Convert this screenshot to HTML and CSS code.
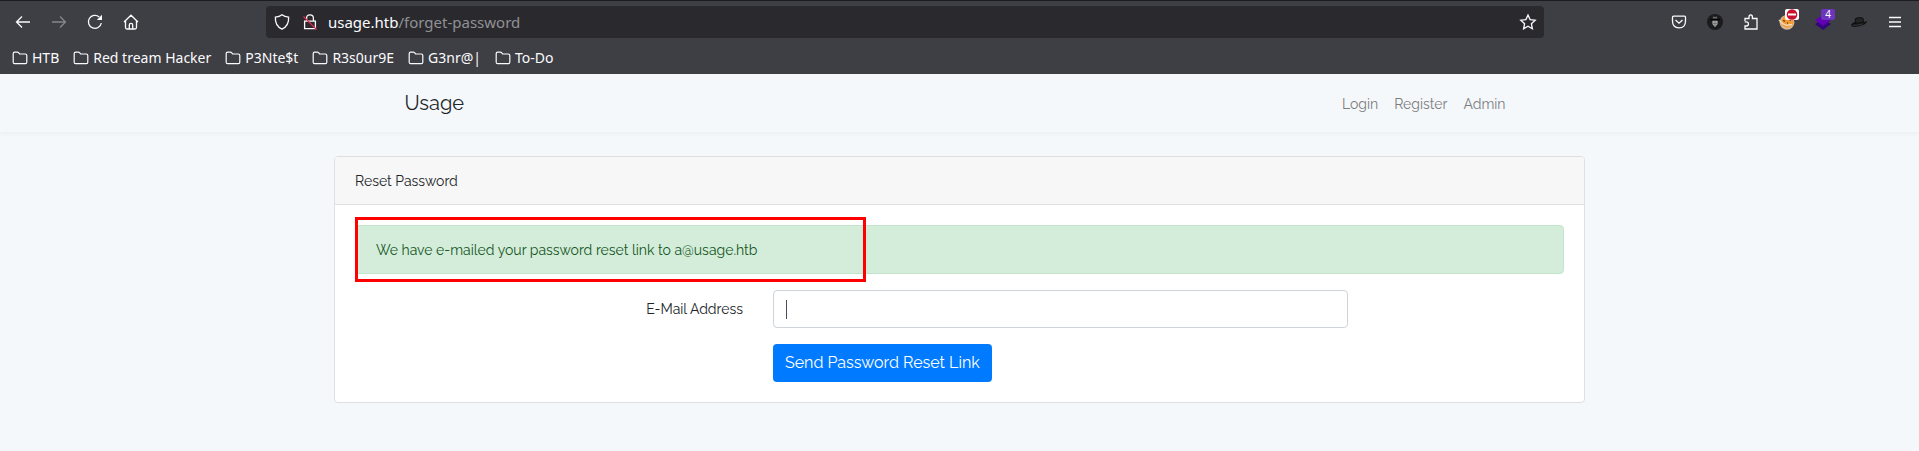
FILE: index.html
```html
<!DOCTYPE html>
<html lang="en">
<head>
<meta charset="utf-8">
<title>Usage</title>
<link rel="stylesheet" href="styles.css">
</head>
<body>
<svg class="defs" aria-hidden="true">
  <symbol id="folder" viewBox="0 0 16 16"><path d="M1.2 12.2V3.6Q1.2 2.1 2.7 2.1H5.3Q6 2.1 6.5 2.7L7.6 4H13.3Q14.8 4 14.8 5.5V12.2Q14.8 13.7 13.3 13.7H2.7Q1.2 13.7 1.2 12.2Z" fill="none" stroke="currentColor" stroke-width="1.2"/></symbol>
</svg>
<header class="browser">
  <div class="toolbar">
    <div class="tools">
      <button class="tool" aria-label="Back"><svg viewBox="0 0 16 16"><path d="M15 8H1.5M7 2.5L1.5 8L7 13.5"/></svg></button>
      <button class="tool tool-off" aria-label="Forward"><svg viewBox="0 0 16 16"><path d="M1 8H14.5M9 2.5L14.5 8L9 13.5"/></svg></button>
      <button class="tool" aria-label="Reload"><svg viewBox="0 0 16 16"><path d="M14.3 9A6.5 6.5 0 1 1 12.2 3"/><path class="solid" d="M15 .8V6H9.8Z"/></svg></button>
      <button class="tool" aria-label="Home"><svg viewBox="0 0 16 16"><path d="M1 8L8 1.2L15 8M2.5 7V13.5Q2.5 15 4 15H12Q13.5 15 13.5 13.5V7M6.3 15V11Q6.3 9.4 8 9.4T9.7 11V15"/></svg></button>
    </div>
    <div class="address">
      <button class="tool" aria-label="Tracking protection"><svg viewBox="0 0 16 16"><path d="M8 .8Q10.5 2.7 14.6 3.2Q15.2 11.5 8 15.2Q.8 11.5 1.4 3.2Q5.5 2.7 8 .8Z"/></svg></button>
      <button class="tool lock" aria-label="Connection is not secure"><svg viewBox="0 0 16 16"><path d="M4.6 7V4.2Q4.6 .8 8 .8T11.4 4.2V7M2.6 7.2H13.4V14.7H2.6Z"/><path class="strike" d="M1.5 2.5L14.5 15.5"/></svg></button>
      <p class="url">usage.htb<span class="path">/forget-password</span></p>
      <button class="tool star" aria-label="Bookmark this page"><svg viewBox="0 0 16 16"><path d="M8 1L10.1 5.6L15.2 6.2L11.4 9.7L12.4 14.8L8 12.2L3.6 14.8L4.6 9.7L.8 6.2L5.9 5.6Z"/></svg></button>
    </div>
    <div class="tools">
      <button class="tool" aria-label="Save to Pocket"><svg viewBox="0 0 16 16"><path d="M2.5 2.2H13.5Q14.5 2.2 14.5 3.2V7Q14.5 13.8 8 13.8T1.5 7V3.2Q1.5 2.2 2.5 2.2ZM4.5 6L8 9.2L11.5 6"/></svg></button>
      <button class="tool" aria-label="Privacy extension"><svg viewBox="0 0 16 16"><circle cx="8" cy="8" r="8" fill="#1b1b1d" stroke="none"/><path d="M5.6 4.6L6.2 2.5Q8 3.3 9.8 2.5L10.4 4.6Z" fill="#6d6d70" stroke="none"/><path d="M3 5.6H13" stroke="#050505"/><path d="M5.4 6.8H10.6V10L8 13.2L5.4 10Z" fill="#a8a8a8" stroke="none"/><path d="M8 7V12.5M6 9.5H10" stroke="#5a5a5a" stroke-width=".6"/></svg></button>
      <button class="tool" aria-label="Extensions"><svg viewBox="0 0 16 16"><path d="M2 7V4.5H6V3Q6 .8 7.7 .8T9.4 3V4.5H14V15H2V12H3.4Q5.4 12 5.4 9.9T3.4 7.8H1.7"/></svg></button>
      <button class="tool" aria-label="Cookie extension"><svg viewBox="0 0 16 16"><circle cx="8" cy="8.3" r="7.4" fill="#d8b895" stroke="none"/><circle cx="8.4" cy="7.4" r="6" fill="#f39a32" stroke="none"/><path d="M0 6L3.5 9.5L7.5 11.3L13 10.5" stroke="#f3dfc5"/><path d="M4 6.2L6 7.4M10.5 6.2H12M8 9H9" stroke="#71431d"/></svg><span class="badge blocked"><svg viewBox="0 0 14 11"><circle cx="7" cy="5.5" r="5.3" fill="#c9112f" stroke="none"/><path d="M3 5.5H11" stroke="#fff" stroke-width="2"/></svg></span></button>
      <button class="tool" aria-label="Wappalyzer"><svg viewBox="0 0 16 16"><path d="M0 10L8 5L16 10L8 16Z" fill="#32067c" stroke="none"/><path d="M0 6L8 1L16 6L8 12Z" fill="#6200b3" stroke="none"/></svg><span class="badge count">4</span></button>
      <button class="tool" aria-label="Hat extension"><svg viewBox="0 0 16 16"><path d="M.4 11.2Q1 8.5 4 8.8Q9 11 15.7 7.6Q15 10.5 8.5 11.8Q1.5 13.5 .4 11.2Z" fill="#111" stroke="#090909" stroke-width=".6"/><path d="M4 8.7L4.5 4.5Q8.5 2.8 12 4.2L12.5 8Q8 10 4 8.7Z" fill="#242426" stroke="#080808" stroke-width=".8"/><path d="M2 11.2Q7 11.6 12 9.8" stroke="#4c4c50" stroke-width=".7"/></svg></button>
      <button class="tool" aria-label="Open menu"><svg viewBox="0 0 16 16"><path d="M2 3.5H14M2 8H14M2 12.5H14"/></svg></button>
    </div>
  </div>
  <nav class="bookmarks" aria-label="Bookmarks">
    <a href="#"><svg><use href="#folder"/></svg>HTB</a>
    <a href="#"><svg><use href="#folder"/></svg>Red tream Hacker</a>
    <a href="#"><svg><use href="#folder"/></svg>P3Nte$t</a>
    <a href="#"><svg><use href="#folder"/></svg>R3s0ur9E</a>
    <a href="#"><svg><use href="#folder"/></svg>G3nr@|</a>
    <a href="#"><svg><use href="#folder"/></svg>To-Do</a>
  </nav>
</header>
<nav class="navbar" aria-label="Main">
  <div class="navbar-inner">
    <a class="brand" href="#">Usage</a>
    <div class="links">
      <a href="#">Login</a>
      <a href="#">Register</a>
      <a href="#">Admin</a>
    </div>
  </div>
</nav>
<main class="main">
  <section class="card">
    <h1 class="card-header">Reset Password</h1>
    <div class="card-body">
      <div class="alert" role="alert">We have e-mailed your password reset link to a@usage.htb<span class="highlight"></span></div>
      <form class="form">
        <label class="label" for="email">E-Mail Address</label>
        <div class="field"><input class="input" id="email" type="email"><span class="caret"></span></div>
        <div class="actions"><button class="submit" type="button">Send Password Reset Link</button></div>
      </form>
    </div>
  </section>
</main>
</body>
</html>
```
FILE: styles.css
```css
* { box-sizing: border-box; }

body {
  margin: 0;
  background: #f5f8fa;
  color: #212529;
  font: 400 14px/23px Raleway, Lato, sans-serif;
}

a { color: inherit; text-decoration: none; }
button { border: 0; background: none; color: inherit; padding: 0; }
.defs { display: none; }

/* Browser chrome */
.browser {
  background: #3e3f44;
  border-top: 1px solid #1c1b22;
  color: #fbfbfe;
  font: 400 15px/20px "Noto Sans", sans-serif;
}

.toolbar {
  display: flex;
  align-items: center;
  padding: 5px 6px 4px 5px;
}

.tools { display: flex; }

.tool {
  position: relative;
  display: flex;
  align-items: center;
  justify-content: center;
  width: 36px;
  height: 32px;
}

.tool > svg {
  width: 16px;
  height: 16px;
  fill: none;
  stroke: currentColor;
  stroke-width: 1.3;
  overflow: visible;
}

.tool-off { color: #85868a; }
.tool .solid { fill: currentColor; stroke: none; }
.tool .strike { stroke: #e22850; }

.address {
  display: flex;
  align-items: center;
  flex: 1;
  height: 32px;
  margin: 0 117px;
  border-radius: 4px;
  background: #2a2a2e;
}

.address .tool { width: 32px; }
.address .lock { width: 24px; }

.url {
  flex: 1;
  margin: 0;
  padding-left: 6px;
}

.path { color: #919195; }

.badge {
  position: absolute;
  top: 3px;
  left: 16px;
  width: 14px;
  height: 11px;
  border-radius: 2px;
}

.badge svg { display: block; width: 14px; height: 11px; }
.blocked { background: #fff; }
.count { background: #6b35bd; color: #fff; font: 10px/11px "Noto Sans", sans-serif; }

.bookmarks {
  display: flex;
  gap: 14px;
  padding: 6px 12px;
  font-size: 14px;
}

.bookmarks a {
  display: flex;
  align-items: center;
  gap: 4px;
}

.bookmarks svg { width: 16px; height: 16px; }

/* Page */
.navbar {
  box-shadow: 0 2px 4px rgba(0, 0, 0, 0.04);
}

.navbar-inner {
  display: flex;
  align-items: center;
  justify-content: space-between;
  max-width: 1140px;
  margin: 0 auto;
  padding: 13px 24px 13px 15px;
}

.brand { font-size: 20px; line-height: 32px; }

.links {
  display: flex;
  gap: 16px;
  padding-top: 2px;
  color: #7b7d7f;
}

.main { padding: 24px 15px; }

.card {
  max-width: 1251px;
  margin: 0 auto;
  border: 1px solid #dfdfdf;
  border-radius: 4px;
  background: #fff;
}

.card-header {
  margin: 0;
  padding: 13px 20px 11px;
  border-bottom: 1px solid #dfdfdf;
  border-radius: 3px 3px 0 0;
  background: #f7f7f7;
  font: inherit;
}

.card-body { padding: 20px; }

.alert {
  position: relative;
  margin-bottom: 16px;
  padding: 13px 20px 11px;
  border: 1px solid #c3e6cb;
  border-radius: 4px;
  background: #d4edda;
  color: #155724;
}

.highlight {
  position: absolute;
  top: -9px;
  left: -1px;
  width: 511px;
  height: 65px;
  border: 3px solid #f00;
}

.form {
  display: grid;
  grid-template-columns: 4fr 6fr 2fr;
  row-gap: 16px;
}

.label { padding: 8px 15px 7px; text-align: right; }
.field { position: relative; padding: 0 15px; }
.actions { grid-column: 2 / 4; padding: 0 15px; }

.input {
  display: block;
  width: 100%;
  height: 38px;
  padding: 6px 12px;
  border: 1px solid #ced4da;
  border-radius: 4px;
  background: #fff;
  color: #495057;
  font: inherit;
}

.caret {
  position: absolute;
  top: 10px;
  left: 28px;
  width: 1px;
  height: 19px;
  background: #495057;
}

.submit {
  display: block;
  height: 38px;
  padding: 0 12px;
  border-radius: 4px;
  background: #007bff;
  color: #fff;
  font: 400 16px/24px Raleway, Lato, sans-serif;
}
```
